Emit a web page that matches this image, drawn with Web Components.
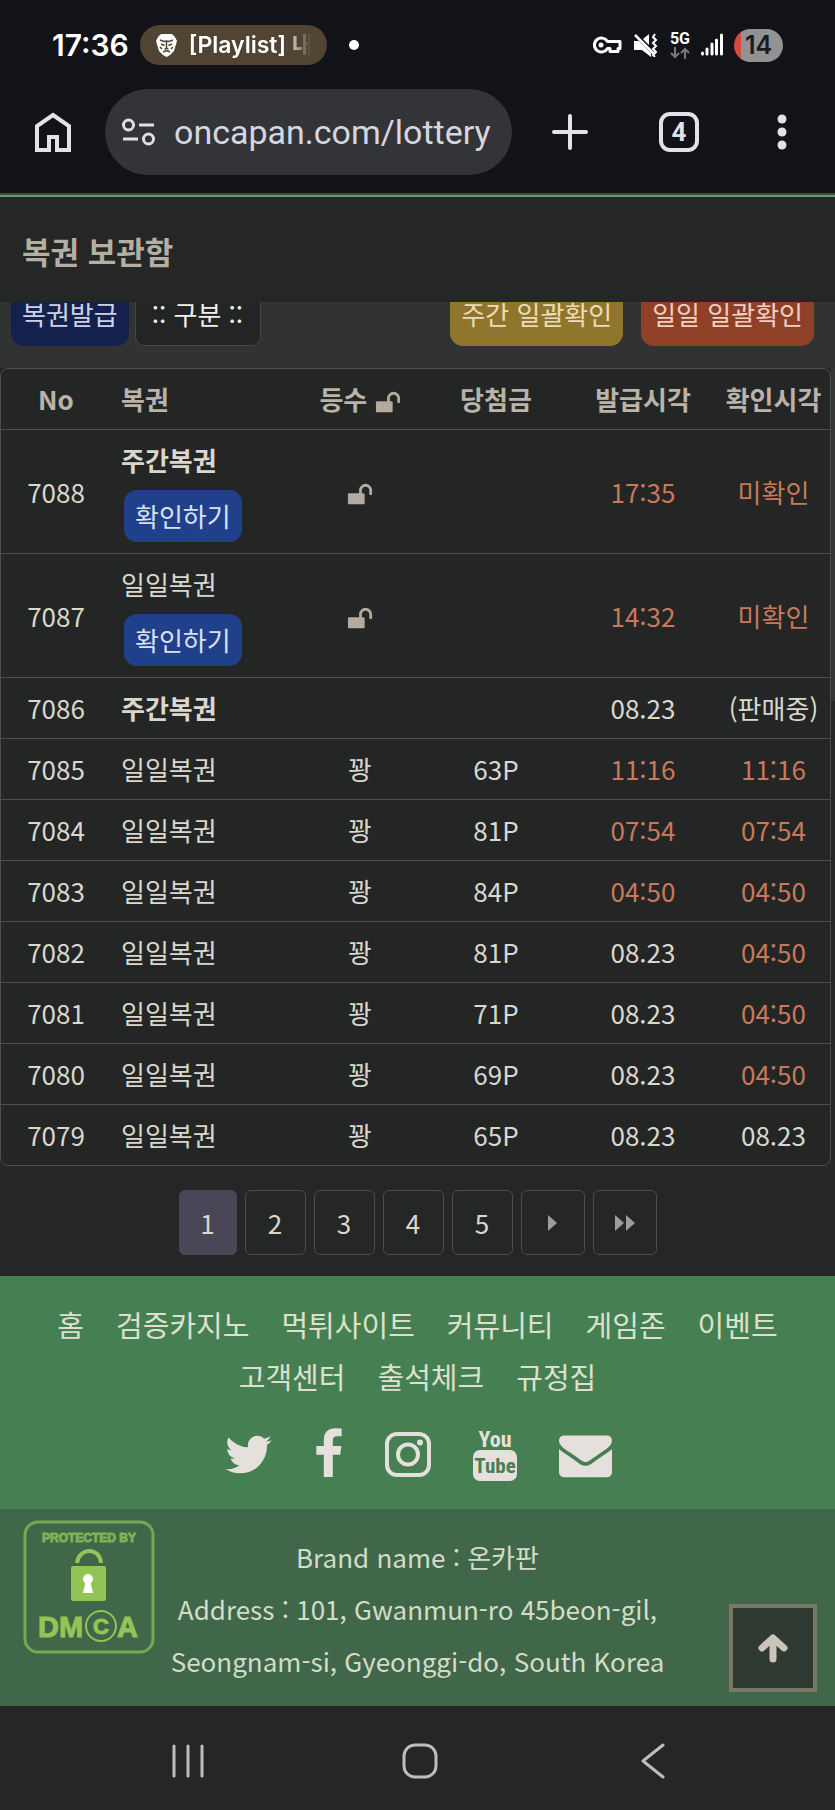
<!DOCTYPE html>
<html lang="ko">
<head>
<meta charset="utf-8">
<meta name="viewport" content="width=device-width, initial-scale=1">
<title>복권 보관함</title>
<style>
	html {
		background: #252726;
	}
	body {
		margin: 0;
		font-family: "Noto Sans CJK KR", sans-serif;
		font-size: 26px;
		line-height: 38px;
		color: #dad7ce;
	}
</style>
</head>
<body>
<phone-status time="17:36" battery="14">[Playlist] 내</phone-status>
<browser-bar url="oncapan.com/lottery" tabs="4"></browser-bar>
<main>
	<page-title>복권 보관함</page-title>
	<ticket-toolbar></ticket-toolbar>
	<ticket-table></ticket-table>
	<page-nav pages="5" current="1"></page-nav>
</main>
<site-footer>
	<span slot="brand">Brand name : 온카판</span>
	<span slot="address">Address : 101, Gwanmun-ro 45beon-gil, Seongnam-si, Gyeonggi-do, South Korea</span>
</site-footer>
<system-nav></system-nav>

<script>
const ICONS = {
	lion: ["0 0 21 24", `<path fill="#fff" d="M5 1h11l3 3 2 4-3 10-4 4-3.500 2L7 22l-4-4L0 8l2-4z"/><path fill="none" stroke="#514432" stroke-width="1.500" d="M4 7l4 1.500 2.500-.500 2.500.500L17 7M5 11l3.500 1.500M16 11l-3.500 1.500M10.500 9v6l-2 1.500M10.500 15l2 1.500M7 19l3.500-1.500L14 19M4 14l2 2M17 14l-2 2"/>`],
	key: ["0 0 30 18", `<path fill="none" stroke="#fff" stroke-width="3" stroke-linejoin="round" d="M15.500 5.500A7 7 0 1 0 15.500 12.500H18V15.500H26V12.500H28V5.500z"/><circle cx="9" cy="9" r="2.500" fill="#fff"/>`],
	mute: ["0 0 26 24", `<path fill="#fff" d="M1 8h5l12 12v4L9 17H1zM10 6l6-5v11z"/><path fill="none" stroke="#fff" stroke-width="2.500" d="M2 2l19 19"/><path fill="none" stroke="#fff" stroke-width="2" d="M22 1l-2 3 3 3-3 3 3 3-3 3 3 3-3 3 2 2"/>`],
	data: ["0 0 20 12", `<path fill="none" stroke="#77787c" stroke-width="2" d="M5 0v10M1 6l4 4 4-4M15 12V2M11 6l4-4 4 4"/>`],
	signal: ["0 0 22 24", `<path stroke="#fff" stroke-width="3" stroke-linecap="round" d="M1.500 20v1M6 16v5M11 11v10M15.500 7v14M20.500 2v19"/>`],
	home: ["0 0 36 40", `<path fill="none" stroke="#e2e2e9" stroke-width="4" d="M2 38V14L18 3l16 11v24H22V25h-8v13z"/>`],
	tune: ["0 0 33 28", `<g fill="none" stroke="#dedfe6" stroke-width="3"><circle cx="6.500" cy="7" r="5"/><path d="M17 7h15M1 21h15"/><circle cx="26.500" cy="21" r="5"/></g>`],
	plus: ["0 0 36 36", `<path stroke="#e2e2e9" stroke-width="4" stroke-linecap="round" d="M18 2v32M2 18h32"/>`],
	dots: ["0 0 24 36", `<g fill="#e2e2e9"><circle cx="12" cy="5" r="4.500"/><circle cx="12" cy="18" r="4.500"/><circle cx="12" cy="31" r="4.500"/></g>`],
	unlock: ["0 0 1792 1792", `<path fill="currentColor" d="M1728 576v256q0 26-19 45t-45 19h-64q-26 0-45-19t-19-45v-256q0-106-75-181t-181-75-181 75-75 181v192h96q40 0 68 28t28 68v576q0 40-28 68t-68 28h-960q-40 0-68-28t-28-68v-576q0-40 28-68t68-28h672v-192q0-185 131.500-316.500t316.500-131.500 316.500 131.500 131.500 316.500z"/>`],
	next: ["0 0 9 18", `<path fill="#9b9d9c" d="M0 1l9 8-9 8z"/>`],
	last: ["0 0 20 18", `<path fill="#9b9d9c" d="M0 1l9 8-9 8zM11 1l9 8-9 8z"/>`],
	twitter: ["64 0 1664 1792", `<path fill="currentColor" d="M1684 408q-67 98-162 167 1 14 1 42 0 130-38 259.500t-115.500 248.500-184.500 210.500-258 146-323 54.500q-271 0-496-145 35 4 78 4 225 0 401-138-105-2-188-64.500t-114-159.500q33 5 61 5 43 0 85-11-112-23-185.500-111.500t-73.500-205.500v-4q68 38 146 41-66-44-105-115t-39-154q0-88 44-163 121 149 294.500 238.500t371.500 99.500q-8-38-8-74 0-134 94.500-228.500t228.500-94.500q140 0 236 102 109-21 205-78-37 115-142 178 93-10 186-50z"/>`],
	facebook: ["399 0 1024 1792", `<path fill="currentColor" d="M1343 12v264h-157q-86 0-116 36t-30 108v189h293l-39 296h-254v759h-306v-759h-255v-296h255v-218q0-186 104-288.500t277-102.500q147 0 228 12z"/>`],
	instagram: ["0 0 46 53", `<g fill="none" stroke="currentColor" stroke-width="4"><rect x="2" y="6" width="42" height="41" rx="10"/><circle cx="23" cy="26.500" r="10"/></g><circle cx="35" cy="14.500" r="3" fill="currentColor"/>`],
	youtube: ["0 0 46 53", `<g font-family="Liberation Sans Narrow, Roboto Condensed, DejaVu Sans Condensed" font-weight="700" text-anchor="middle"><text x="23" y="19" font-size="22" fill="currentColor">You</text><rect x="1" y="22" width="44" height="31" rx="7" fill="currentColor"/><text x="23" y="45" font-size="21" fill="#468052">Tube</text></g>`],
	mail: ["0 0 1792 1792", `<path fill="currentColor" d="M1792 710v794q0 66-47 113t-113 47h-1472q-66 0-113-47t-47-113v-794q44 49 101 87 362 246 497 345 57 42 92.500 65.500t94.500 48 110 24.500h2q51 0 110-24.500t94.500-48 92.500-65.500q170-123 498-345 57-39 100-87zm0-294q0 79-49 151t-122 123q-376 261-468 325-10 7-42.500 31t-54 38.500-52 32.500-57.500 27-50 9h-2q-23 0-50-9t-57.500-27-52-32.500-54-38.500-42.500-31q-91-64-262-182.500t-205-142.500q-62-42-117-115.500t-55-136.500q0-78 41.500-130t118.500-52h1472q65 0 112.500 47t47.500 113z"/>`],
	dmca: ["0 0 132 134", `<rect x="2" y="2" width="128" height="130" rx="13" fill="none" stroke="#76a851" stroke-width="3"/>
		<g font-family="Liberation Sans" font-weight="700" fill="#94c356" stroke="#94c356">
		<text x="66" y="22" font-size="12" text-anchor="middle" fill="#7fb155" stroke="#7fb155">PROTECTED BY</text>
		<text x="15" y="117" font-size="29">DM</text><text x="78" y="114" font-size="22" text-anchor="middle">C</text><text x="94" y="117" font-size="29">A</text></g>
		<circle cx="78" cy="106" r="15" fill="none" stroke="#94c356" stroke-width="2"/>
		<path fill="none" stroke="#94c356" stroke-width="4" d="M54 43c2-16 23-16 24 0"/>
		<rect x="48" y="46" width="35" height="35" rx="2" fill="#94c356"/>
		<circle cx="65" cy="59" r="5" fill="#fff"/><path fill="#fff" d="M63 60h4l3 13H60z"/>`],
	up: ["0 0 30 30", `<path fill="none" stroke="#cbc4ba" stroke-width="7" stroke-linecap="round" stroke-linejoin="round" d="M15 26V6M4 15L15 5l11 10"/>`],
	recents: ["0 0 34 36", `<path stroke="#bdbdbd" stroke-width="3" stroke-linecap="round" d="M3 3v30M17 3v30M31 3v30"/>`],
	circle: ["0 0 36 36", `<rect x="2" y="2" width="32" height="32" rx="11" fill="none" stroke="#bdbdbd" stroke-width="3"/>`],
	back: ["0 0 24 36", `<path fill="none" stroke="#bdbdbd" stroke-width="3" stroke-linecap="round" stroke-linejoin="round" d="M22 2L2 18l20 16"/>`]
};

// small base: every element renders its markup once into an open root
class BaseElement extends HTMLElement {
	constructor() {
		super();
		this.attachShadow({ mode: "open" });
	}
	connectedCallback() {
		this.shadowRoot.innerHTML = this.render();
	}
}

class AppIcon extends BaseElement {
	render() {
		const [box, shape] = ICONS[this.getAttribute("name")];
		const w = this.getAttribute("w");
		const h = this.getAttribute("h");
		return `
<style>
	:host { display: inline-block; flex: none; line-height: 0; }
	svg { display: block; }
</style>
<svg width="${w}" height="${h}" viewBox="${box}" aria-hidden="true">${shape}</svg>`;
	}
}
customElements.define("app-icon", AppIcon);

class PhoneStatus extends BaseElement {
	render() {
		return `
<style>
	:host {
		display: flex;
		align-items: center;
		justify-content: space-between;
		padding: 25px 52px 24px;
		background: #121318;
		color: #fff;
		font-family: Inter, "Noto Sans CJK KR", sans-serif;
		line-height: 40px;
	}
	.side { display: flex; align-items: center; gap: 11px; }
	time { font-size: 30px; font-weight: 600; }
	.media {
		display: flex;
		align-items: center;
		gap: 12px;
		box-sizing: border-box;
		width: 187px;
		height: 40px;
		padding: 0 16px;
		border-radius: 20px;
		background: #514432;
		font-size: 23px;
		font-weight: 600;
	}
	.media span {
		overflow: hidden;
		white-space: nowrap;
		-webkit-mask-image: linear-gradient(to right, #000 78%, transparent);
		mask-image: linear-gradient(to right, #000 78%, transparent);
	}
	.dot { width: 10px; height: 10px; margin-left: 11px; border-radius: 50%; background: #fff; }
	.net { display: flex; flex-direction: column; align-items: center; font: 700 16px/14px Roboto, sans-serif; gap: 1px; }
	.battery {
		width: 49px;
		height: 33px;
		border-radius: 17px;
		background: linear-gradient(to right, #d9483a 7px, #929292 7px);
		color: #1b1b1d;
		font-size: 25px;
		font-weight: 600;
		line-height: 33px;
		text-align: center;
	}
</style>
<div class="side">
	<time>${this.getAttribute("time")}</time>
	<div class="media"><app-icon name="lion" w="21" h="24"></app-icon><span><slot></slot></span></div>
	<div class="dot"></div>
</div>
<div class="side">
	<app-icon name="key" w="30" h="18"></app-icon>
	<app-icon name="mute" w="26" h="24"></app-icon>
	<div class="net">5G<app-icon name="data" w="20" h="12"></app-icon></div>
	<app-icon name="signal" w="22" h="24"></app-icon>
	<div class="battery">${this.getAttribute("battery")}</div>
</div>`;
	}
}
customElements.define("phone-status", PhoneStatus);

class BrowserBar extends BaseElement {
	render() {
		return `
<style>
	:host {
		display: flex;
		align-items: center;
		padding: 0 41px 18px 35px;
		background: #121318;
		border-bottom: 2px solid #3a4b42;
		font-family: Roboto, sans-serif;
	}
	button { flex: none; padding: 0; border: 0; background: none; color: #e2e2e9; font: inherit; }
	button app-icon { display: block; }
	.address {
		display: flex;
		flex: 1;
		align-items: center;
		gap: 19px;
		min-width: 0;
		height: 86px;
		margin: 0 40px 0 34px;
		padding: 0 17px;
		box-sizing: border-box;
		border-radius: 43px;
		background: #333438;
	}
	input {
		flex: 1;
		min-width: 0;
		padding: 0;
		border: 0;
		background: none;
		color: #d6d7de;
		font-family: inherit;
		font-size: 34px;
	}
	.actions { display: flex; align-items: center; gap: 71px; }
	.tabs {
		width: 40px;
		height: 40px;
		border: 4px solid #e2e2e9;
		border-radius: 11px;
		font-size: 26px;
		font-weight: 700;
		line-height: 32px;
	}
</style>
<button aria-label="홈"><app-icon name="home" w="36" h="40"></app-icon></button>
<div class="address">
	<app-icon name="tune" w="33" h="28"></app-icon>
	<input type="text" aria-label="주소" value="${this.getAttribute("url")}">
</div>
<div class="actions">
	<button aria-label="새 탭"><app-icon name="plus" w="36" h="36"></app-icon></button>
	<button class="tabs">${this.getAttribute("tabs")}</button>
	<button aria-label="메뉴"><app-icon name="dots" w="24" h="36"></app-icon></button>
</div>`;
	}
}
customElements.define("browser-bar", BrowserBar);

class PageTitle extends BaseElement {
	render() {
		return `
<style>
	:host { display: block; padding: 30px 22px 28px; border-top: 2px solid #6a9a75; background: #252726; }
	h1 { margin: 0; color: #b5aea2; font-size: 31px; font-weight: 700; line-height: 47px; }
</style>
<h1><slot></slot></h1>`;
	}
}
customElements.define("page-title", PageTitle);

class TicketToolbar extends BaseElement {
	render() {
		return `
<style>
	/* the controls are scrolled partly under the title */
	:host {
		display: flex;
		align-items: flex-end;
		gap: 6px;
		box-sizing: border-box;
		height: 66px;
		padding: 0 21px 22px 11px;
		overflow: hidden;
		background: #313332;
	}
	button, select {
		flex: none;
		box-sizing: border-box;
		height: 64px;
		padding: 0 11px;
		border: 0;
		border-radius: 13px;
		font: inherit;
	}
	.issue { background: #14214f; color: #cdd2e2; }
	select {
		width: 126px;
		padding: 0 16px;
		appearance: none;
		border: 1px solid #454746;
		border-radius: 9px;
		background: #232524;
		color: #f2f0ec;
	}
	.bulk { display: flex; gap: 18px; margin-left: auto; }
	.week { background: #8f762c; color: #ecdcb8; }
	.day { background: #8f4026; color: #efd0c2; }
</style>
<button class="issue">복권발급</button>
<select aria-label="구분"><option>:: 구분 ::</option></select>
<div class="bulk">
	<button class="week">주간 일괄확인</button>
	<button class="day">일일 일괄확인</button>
</div>`;
	}
}
customElements.define("ticket-toolbar", TicketToolbar);

const LOCK = `<app-icon name="unlock" w="26" h="26"></app-icon>`;

const TICKETS = [
	{ no: 7088, name: "주간복권", week: true, open: true, rank: LOCK, prize: "", issued: "17:35", checked: "미확인" },
	{ no: 7087, name: "일일복권", open: true, rank: LOCK, prize: "", issued: "14:32", checked: "미확인" },
	{ no: 7086, name: "주간복권", week: true, rank: "", prize: "", issued: "08.23", checked: "(판매중)" },
	{ no: 7085, name: "일일복권", rank: "꽝", prize: "63P", issued: "11:16", checked: "11:16" },
	{ no: 7084, name: "일일복권", rank: "꽝", prize: "81P", issued: "07:54", checked: "07:54" },
	{ no: 7083, name: "일일복권", rank: "꽝", prize: "84P", issued: "04:50", checked: "04:50" },
	{ no: 7082, name: "일일복권", rank: "꽝", prize: "81P", issued: "08.23", checked: "04:50" },
	{ no: 7081, name: "일일복권", rank: "꽝", prize: "71P", issued: "08.23", checked: "04:50" },
	{ no: 7080, name: "일일복권", rank: "꽝", prize: "69P", issued: "08.23", checked: "04:50" },
	{ no: 7079, name: "일일복권", rank: "꽝", prize: "65P", issued: "08.23", checked: "08.23" }
];

class TicketTable extends BaseElement {
	// today's times and unchecked tickets are highlighted
	time(value) {
		const hot = value.includes(":") || value === "미확인";
		return `<td${hot ? ' class="hot"' : ""}>${value}</td>`;
	}

	row(t) {
		const name = t.week ? `<b>${t.name}</b>` : t.name;
		const open = t.open ? `<button>확인하기</button>` : "";
		return `<tr><td>${t.no}</td><td class="name">${name}${open}</td><td>${t.rank}</td><td>${t.prize}</td>${this.time(t.issued)}${this.time(t.checked)}</tr>`;
	}

	render() {
		return `
<style>
	:host { display: block; position: relative; padding-right: 4px; background: #252726; }
	table {
		width: 100%;
		table-layout: fixed;
		border: 1px solid #4c4e4d;
		border-radius: 8px;
		border-spacing: 0;
		background: #242625;
	}
	th, td { padding: 11px 0; border-bottom: 1px solid #4c4e4d; text-align: center; white-space: nowrap; }
	tr:last-child td { border-bottom: 0; }
	th { border-bottom: 1px solid #4c4e4d; color: #bab3a9; font-weight: 700; }
	th.name, td.name { padding-left: 10px; text-align: left; }
	.no { width: 110px; }
	.name { width: 176px; }
	.grade { width: 126px; }
	.prize { width: 146px; }
	.issued { width: 148px; }
	.hot { color: #c9785a; }
	app-icon { color: #b3ab9e; vertical-align: middle; }
	button {
		display: block;
		height: 52px;
		margin: 11px 0 0 3px;
		padding: 0 11px;
		border: 0;
		border-radius: 13px;
		background: #20408c;
		color: #dbe0f0;
		font: inherit;
	}
	.thumb { position: absolute; top: 0; right: 0; width: 4px; height: 333px; background: #343635; }
</style>
<table>
	<thead>
		<tr><th class="no">No</th><th class="name">복권</th><th class="grade">등수 ${LOCK}</th><th class="prize">당첨금</th><th class="issued">발급시각</th><th>확인시각</th></tr>
	</thead>
	<tbody>${TICKETS.map((t) => this.row(t)).join("")}</tbody>
</table>
<div class="thumb"></div>`;
	}
}
customElements.define("ticket-table", TicketTable);

class PageNav extends BaseElement {
	render() {
		const current = Number(this.getAttribute("current"));
		let links = "";
		for (let i = 1; i <= Number(this.getAttribute("pages")); i++) {
			links += `<a href="#"${i === current ? ' aria-current="page"' : ""}>${i}</a>`;
		}
		return `
<style>
	nav { display: flex; justify-content: center; gap: 8px; padding: 24px 0 21px; }
	a {
		display: flex;
		align-items: center;
		justify-content: center;
		box-sizing: border-box;
		width: 61px;
		height: 65px;
		border: 1px solid #4a4c4b;
		border-radius: 6px;
		color: inherit;
		text-decoration: none;
	}
	a[aria-current] { width: 58px; border-color: #494757; background: #494757; }
	.jump { width: 64px; }
</style>
<nav>
	${links}
	<a class="jump" href="#" aria-label="다음"><app-icon name="next" w="9" h="18"></app-icon></a>
	<a class="jump" href="#" aria-label="마지막"><app-icon name="last" w="20" h="18"></app-icon></a>
</nav>`;
	}
}
customElements.define("page-nav", PageNav);

class SiteFooter extends BaseElement {
	render() {
		const menu = ["홈", "검증카지노", "먹튀사이트", "커뮤니티", "게임존", "이벤트", "고객센터", "출석체크", "규정집"];
		return `
<style>
	:host { display: block; position: relative; line-height: 52px; }
	.links { padding: 22px 24px 28px; background: #468052; color: #e6e0dc; }
	a { color: inherit; text-decoration: none; }
	.menu { display: flex; flex-wrap: wrap; justify-content: center; column-gap: 32px; color: #dde0cc; font-size: 29px; }
	.social { display: flex; justify-content: center; gap: 41px; padding-top: 26px; }
	.social app-icon { display: block; }
	.info {
		display: grid;
		grid-template-columns: 132px 1fr 132px;
		column-gap: 10px;
		padding: 11px 23px 19px;
		background: #41674a;
		color: #d3dcc8;
	}
	.text { padding-top: 11px; text-align: center; }
	.text slot { display: block; }
	.top {
		position: absolute;
		right: 18px;
		bottom: 14px;
		display: grid;
		place-items: center;
		width: 88px;
		height: 88px;
		padding: 0;
		border: 4px solid #7a7867;
		background: #2f3b32;
	}
</style>
<div class="links">
	<nav class="menu">${menu.map((m) => `<a href="#">${m}</a>`).join("")}</nav>
	<div class="social">
		<a href="#" aria-label="Twitter"><app-icon name="twitter" w="49" h="53"></app-icon></a>
		<a href="#" aria-label="Facebook"><app-icon name="facebook" w="30" h="53"></app-icon></a>
		<a href="#" aria-label="Instagram"><app-icon name="instagram" w="46" h="53"></app-icon></a>
		<a href="#" aria-label="YouTube"><app-icon name="youtube" w="46" h="53"></app-icon></a>
		<a href="#" aria-label="Mail"><app-icon name="mail" w="53" h="53"></app-icon></a>
	</div>
</div>
<div class="info">
	<app-icon name="dmca" w="132" h="134"></app-icon>
	<div class="text"><slot name="brand"></slot><slot name="address"></slot></div>
</div>
<button class="top" aria-label="맨 위로"><app-icon name="up" w="30" h="30"></app-icon></button>`;
	}
}
customElements.define("site-footer", SiteFooter);

class SystemNav extends BaseElement {
	render() {
		return `
<style>
	:host {
		display: grid;
		grid-template-columns: repeat(3, 28%);
		justify-content: center;
		box-sizing: border-box;
		height: 104px;
		padding: 6px 0 0 6px;
		background: #252726;
	}
	button { display: grid; place-items: center; padding: 0; border: 0; background: none; }
</style>
<button aria-label="최근 앱"><app-icon name="recents" w="34" h="36"></app-icon></button>
<button aria-label="홈"><app-icon name="circle" w="36" h="36"></app-icon></button>
<button aria-label="뒤로"><app-icon name="back" w="24" h="36"></app-icon></button>`;
	}
}
customElements.define("system-nav", SystemNav);
</script>
</body>
</html>
